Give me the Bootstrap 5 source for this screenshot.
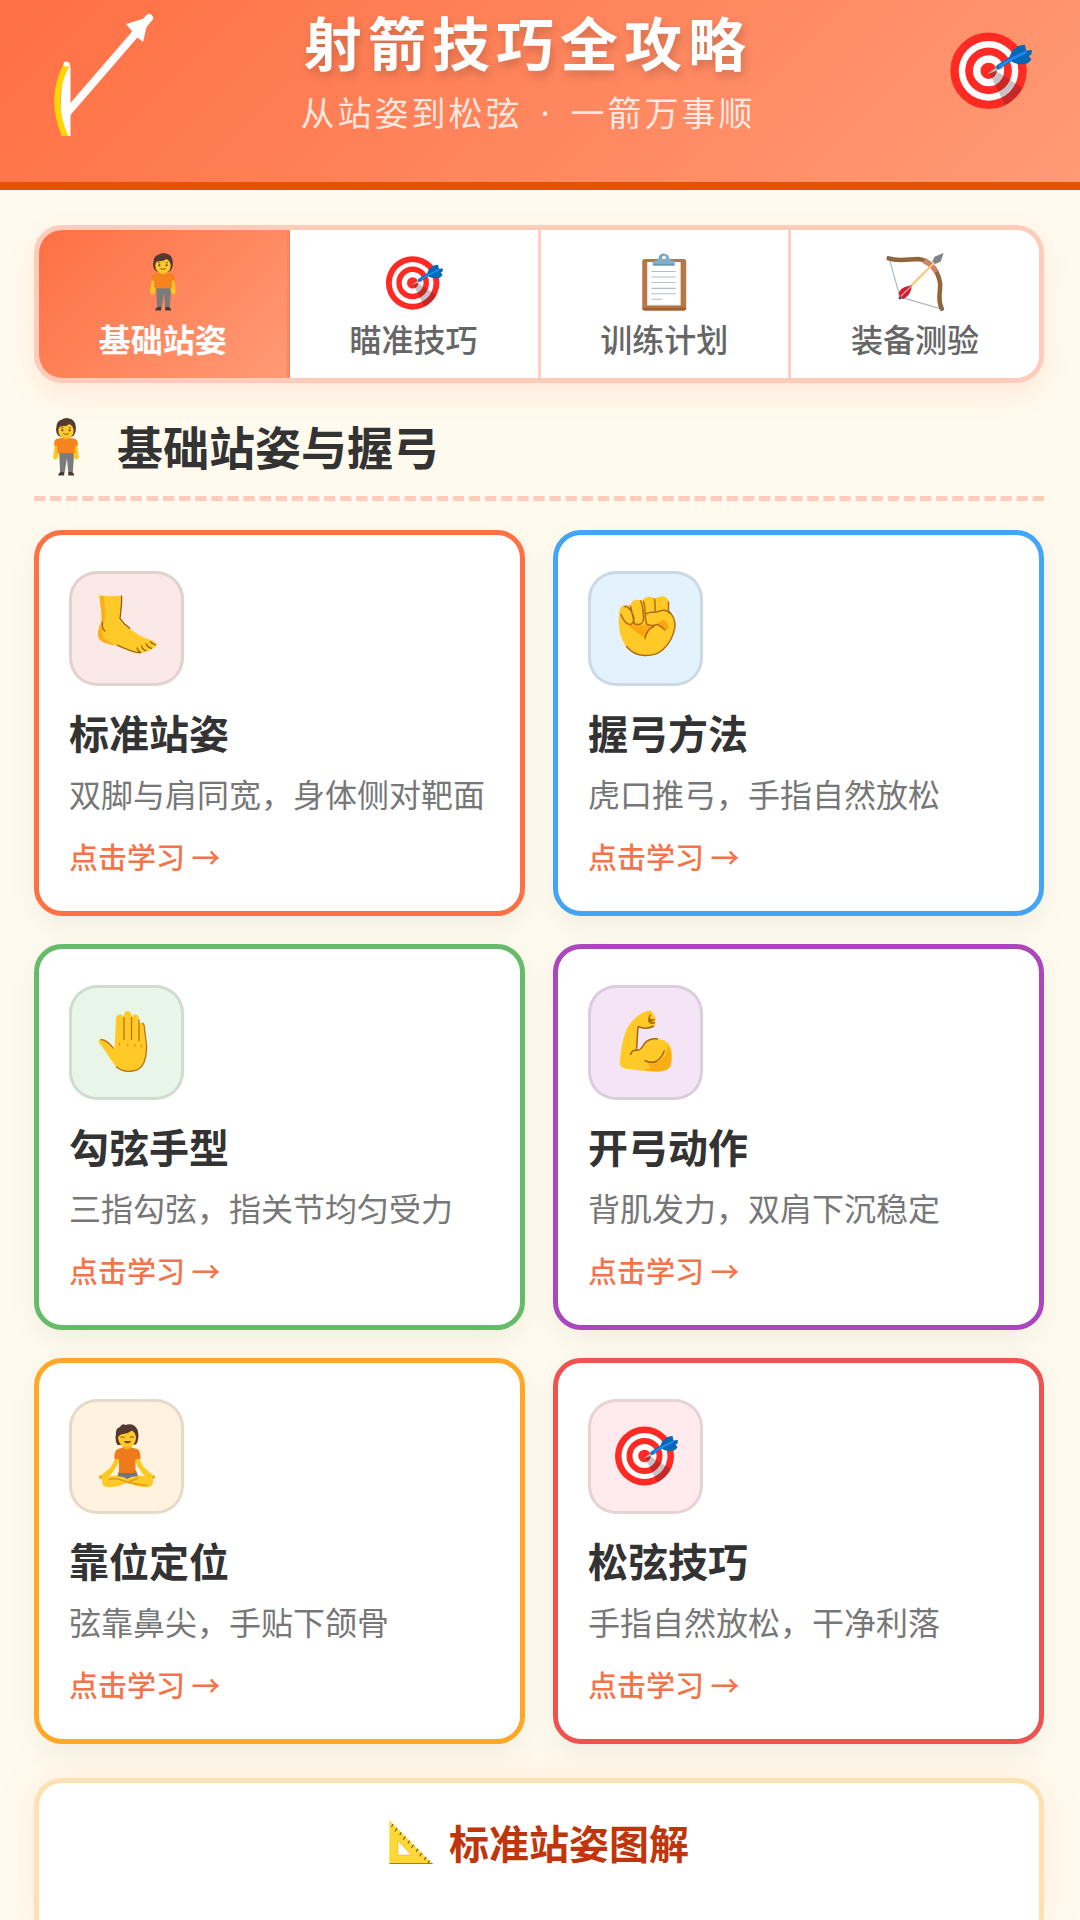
<!DOCTYPE html>
<html lang="zh-CN">
<head>
<meta charset="utf-8">
<meta name="viewport" content="width=device-width, initial-scale=1">
<title>射箭技巧全攻略</title>
<link href="https://cdn.jsdelivr.net/npm/bootstrap@5.3.0/dist/css/bootstrap.min.css" rel="stylesheet">
<style>
  :root { --fire: #ff7043; --peach: #ffccbc; --glow: linear-gradient(135deg, #ff7043, #ff9a76); }
  body { font-family: "Noto Sans CJK SC", "Noto Sans", sans-serif; background: #fffaee; color: #333; }
  svg { display: block; }
  .hero { background: var(--glow); border-bottom: 8px solid #e65100; padding: 0 48px 43px 34px; }
  .hero-side { width: 130px; padding-top: 28px; }
  .hero h1 { font-size: 58px; line-height: 70px; letter-spacing: 6px; font-weight: 700; color: #fff; text-shadow: 2px 5px 10px rgba(0,0,0,.18); margin: 6px 0 10px; }
  .hero p { font-size: 34px; line-height: 52px; letter-spacing: 3px; color: rgba(255,255,255,.82); margin: 0; }
  .hero p span { font-family: "Noto Sans", sans-serif; padding: 0 6px; }
  .page-body { padding: 35px 36px 0 34px; }
  .tab-strip { border: 5px solid var(--peach); border-radius: 28px; overflow: hidden; background: #fff; box-shadow: 0 11px 28px rgba(255,112,67,.12); }
  .tab-strip button { flex: 1 1 0; border: 0; border-right: 3px solid #fbd0c0; background: #fff; color: #666; font-size: 32px; line-height: 40px; font-weight: 500; padding: 23px 0 20px; gap: 7px; }
  .tab-strip button:last-child { border-right: 0; }
  .tab-strip button.active { background: var(--glow); border-right-color: #f8875f; color: #fff; font-weight: 700; }
  .ico-tab { width: 58px; height: 58px; }
  .ico-tile { width: 64px; height: 64px; }
  .ico-hero { width: 83px; height: 83px; }
  .ico-title { width: 44px; height: 44px; }
  .section-head { margin-top: 29px; padding: 6px 3px 20px; gap: 22px; }
  .section-head h2 { font-size: 46px; line-height: 54px; font-weight: 700; margin: 0 0 4px; }
  .dash-rule { height: 5px; margin: 0 -5px 29px 0; background: linear-gradient(90deg, var(--peach) 11px, transparent 11px) 0 0 / 16px 5px round; }
  .skill-grid { --bs-gutter-x: 28px; --bs-gutter-y: 28px; }
  .skill { border: 5px solid var(--tone); border-radius: 28px; padding: 36px 24px 35px 30px; background: #fff; box-shadow: 0 10px 30px rgba(0,0,0,.05); }
  .tile { width: 115px; height: 115px; border-radius: 28px; border: 3px solid rgba(0,0,0,.1); background: var(--tint); padding-bottom: 4px; margin-bottom: 22px; }
  .skill h3 { font-size: 40px; line-height: 48px; font-weight: 700; margin: 0 0 14px; }
  .skill p { font-size: 32px; line-height: 46px; color: #777; margin: 0 0 20px; white-space: nowrap; }
  .skill a { font-size: 29px; line-height: 40px; font-weight: 500; color: #f4744a; text-decoration: none; }
  .t1 { --tone: #ff7043; --tint: #fbe9e7; } .t2 { --tone: #42a5f5; --tint: #e3f2fd; }
  .t3 { --tone: #66bb6a; --tint: #e8f5e9; } .t4 { --tone: #ab47bc; --tint: #f3e5f5; }
  .t5 { --tone: #ffa726; --tint: #fff3e0; } .t6 { --tone: #ef5350; --tint: #ffebee; }
  .diagram { margin-top: 34px; border: 5px solid #ffe0b2; border-bottom: 0; border-radius: 28px 28px 0 0; background: #fff; padding: 34px 28px; box-shadow: 0 0 40px rgba(255,112,67,.1); min-height: 143px; }
  .diagram h2 { font-size: 40px; line-height: 50px; font-weight: 700; color: #bf360c; margin: 0; gap: 16px; }
</style>
<script src="https://cdn.jsdelivr.net/npm/bootstrap@5.3.0/dist/js/bootstrap.bundle.min.js" defer></script>
</head>
<body class="d-flex flex-column min-vh-100">
<svg width="0" height="0" class="position-absolute" aria-hidden="true">
  <symbol id="i-target" viewBox="0 0 128 128">
    <clipPath id="disc"><circle cx="61" cy="66" r="59"/></clipPath>
    <circle cx="61" cy="66" r="59" fill="#ff2a23"/><circle cx="61" cy="66" r="46" fill="#fff"/>
    <circle cx="61" cy="66" r="36" fill="#ff2a23"/><circle cx="61" cy="66" r="24" fill="#fff"/>
    <circle cx="61" cy="66" r="12.500" fill="#ff2a23"/>
    <path clip-path="url(#disc)" d="M61 67 88 122 116 94 72 66z" fill="#3b2030" opacity=".28"/>
    <path d="M60 70 79 56 84 62 62 70z" fill="#b0b6ba"/>
    <path d="M76 60 96 47" stroke="#0f6fb5" stroke-width="7" stroke-linecap="round"/>
    <path d="M93 48C94 36 104 26 117 26L119 35 128 34 127 41 123 43 127 48C123 57 112 58 98 53Z" fill="#0668b4"/>
    <path d="M77 60 94 49 119 37" stroke="#1e88f5" stroke-width="4" fill="none"/>
  </symbol>
  <symbol id="i-person" viewBox="0 0 128 128">
    <path d="M49 76H82L79 121H69L66 88 61 121H51Z" fill="#7b7b7b"/>
    <path d="M47 127Q47 120 53 119H60V127ZM69 119H76Q82 120 82 127H69Z" fill="#4a3a35"/>
    <path d="M40 54 36 84Q35 91 41 92 46 91 47 84L50 60ZM88 54 92 84Q93 91 87 92 82 91 81 84L78 60Z" fill="#fdc921"/>
    <path d="M64 43Q80 44 86 47 91 51 90 61H84L83 78H45L44 61H38Q37 51 42 47 48 44 64 43Z" fill="#f5841f"/>
    <path d="M56 36H72V44Q64 51 56 44Z" fill="#f2b01e"/>
    <path d="M47 39Q40 32 43 19 44 6 54 4 62-2 71 1 83 3 85 16 88 30 81 39L74 42H54Z" fill="#543930"/>
    <path d="M47 27Q48 18 55 18 66 18 71 13 80 17 81 27 81 44 64 44 47 44 47 27Z" fill="#ffca28"/>
    <circle cx="56" cy="27" r="2.300" fill="#543930"/><circle cx="72" cy="27" r="2.300" fill="#543930"/>
    <path d="M58 34Q64 39 70 34M53 22 58 21M70 21 75 22" stroke="#7b4a24" stroke-width="2" fill="none"/>
  </symbol>
  <symbol id="i-board" viewBox="0 0 128 128">
    <rect x="16" y="13" width="97" height="114" rx="5" fill="#ba7642"/>
    <path d="M16 121Q16 127 22 127H107Q113 127 113 121Z" fill="#a0602f"/>
    <path d="M27 20H100V115H27Z" fill="#fff"/><path d="M100 20V115H27" fill="none" stroke="#dedede" stroke-width="2"/>
    <path d="M36 41H90M36 53H90M36 65H90M36 78H90M36 90H90M36 102H60" stroke="#b4c0c4" stroke-width="2.400"/>
    <path d="M39 28V21Q39 18 44 17L52 14Q52 1 64 1 75 1 76 14L84 17Q88 18 88 22V28Z" fill="#82aec8"/>
    <circle cx="64" cy="10" r="4" fill="#fff"/><path d="M54 13Q54 3 64 3M41 26H86" stroke="#5f8ea9" stroke-width="2" fill="none"/>
  </symbol>
  <symbol id="i-bow" viewBox="0 0 128 128">
    <path d="M7 12 31 97 123 124" fill="none" stroke="#b0bec5" stroke-width="2.800"/>
    <path d="M6 12C26 19 48 14 70 13 98 14 114 40 119 64 122 84 112 102 123 123" fill="none" stroke="#916639" stroke-width="10" stroke-linecap="round"/>
    <path d="M84 18Q102 25 111 42" fill="none" stroke="#d0836a" stroke-width="11"/>
    <path d="M31 97 106 22" stroke="#f7c873" stroke-width="4.500"/>
    <path d="M28 92Q29 77 49 73L56 71Q58 78 54 85 49 97 37 102Z" fill="#cc1f36"/>
    <path d="M30 98 56 73" stroke="#f59a8d" stroke-width="3"/>
    <path d="M102 19 107 8 127 0 121 19 109 24Z" fill="#848484"/>
    <circle cx="31" cy="99" r="3.500" fill="#4d4d4d"/><path d="M3 7 10 15M118 122 127 121" stroke="#6d7377" stroke-width="3"/>
  </symbol>
  <symbol id="i-foot" viewBox="0 0 128 128">
    <path d="M9 1Q30 4 53 1 54 16 50 47 57 58 70 67 86 82 111 90 124 94 123 101 120 107 114 107 110 113 103 112 98 117 91 116 80 119 68 111 52 104 35 99 11 96 7 85 4 76 12 56 16 42 11 21Z" fill="#ffca28"/>
    <path d="M9 1 18 2 21 42Q11 72 17 85 27 96 44 101 13 98 7 85 4 74 12 55 15 43 11 21Z" fill="#fbae17"/>
    <path d="M53 1Q54 16 50 47 57 58 70 67M15 54Q13 68 21 73M44 100Q70 113 91 116M84 105Q85 112 92 116M93 101Q94 109 103 112M102 97Q105 105 114 107M110 93Q116 99 122 100" fill="none" stroke="#8d5a12" stroke-width="2.500"/>
  </symbol>
  <symbol id="i-fist" viewBox="0 0 128 128">
    <path d="M10 39Q10 20 24 20L32 20Q37 8 49 10L58 10Q63 1 73 4 79 4 82 8 87 2 98 3 109 4 109 14V32Q122 42 122 63 118 91 98 109 83 122 61 121 38 119 22 100 7 77 10 39Z" fill="#ffca28"/>
    <path d="M25 58Q42 61 57 60L84 62 72 66 63 87Q44 75 25 58ZM84 59 99 49Q107 53 110 67Q101 74 89 61Z" fill="#f9a80f"/>
    <path d="M14 39Q22 60 34 59 45 51 36 35 30 23 21 23M33 23Q37 39 41 58 58 62 59 48 59 23 53 12M59 13Q63 25 62 37M81 8Q83 20 82 34M109 14V32Q122 42 122 63 118 91 98 109 83 122 61 121 39 120 25 103M63 41Q62 34 86 34 104 26 112 37M62 42 65 58Q74 63 86 59 93 61 102 70M80 63Q65 68 62 87" fill="none" stroke="#b46a12" stroke-width="3" stroke-linecap="round"/>
  </symbol>
  <symbol id="i-hand" viewBox="0 0 128 128">
    <path d="M39 79 42 19Q43 10 50 11 57 11 58 19V12Q59 4 66 4 72 5 73 13V19Q74 10 81 11 88 12 88 20L89 31Q90 26 95 28 99 31 99 40L103 70Q104 92 98 107 92 122 75 124 55 127 42 115 32 104 22 86L8 67Q5 63 11 61 25 62 39 79Z" fill="#ffca28"/>
    <path d="M99 40 103 72Q104 92 98 107 92 122 75 124 55 127 42 115M58 16V62M73 16V62M88 24V64M11 61Q25 62 37 79M88 21 88 30M95 28Q99 30 99 40" fill="none" stroke="#ba7414" stroke-width="2.600"/>
    <path d="M50 67Q47 70 49 74M65 69V75M80 70V76M94 71Q92 74 93 77" stroke="#e99e11" stroke-width="3" fill="none"/>
  </symbol>
  <symbol id="i-arm" viewBox="0 0 128 128">
    <path d="M70 3Q78 4 80 13 86 20 82 27 84 35 75 37 60 42 48 36L45 83Q55 83 60 70 70 58 88 60 108 61 114 78 118 94 113 114 108 124 88 125 49 123 27 120 11 118 12 108 13 71 25 41 42 10 70 3Z" fill="#ffca28"/>
    <path d="M107 73Q119 91 113 114 108 124 88 125 70 125 60 123L72 118Q72 111 65 107 105 111 107 73Z" fill="#fbac13"/>
    <path d="M48 35Q64 42 80 34M48 35 45 83M33 92Q36 81 45 83 54 83 60 70 70 58 88 60M61 103Q88 116 101 83M73 11Q69 18 70 24L81 21M69 24Q73 31 82 27M76 28 72 19" fill="none" stroke="#a36711" stroke-width="3"/>
  </symbol>
  <symbol id="i-lotus" viewBox="0 0 128 128">
    <path d="M41 70 32 88 14 103Q6 105 9 111L23 112Q38 99 50 73ZM88 70 97 88 114 103Q123 105 119 111L106 112Q90 99 79 73Z" fill="#fdc921"/>
    <path d="M14 112Q24 105 48 105L65 112 83 105Q107 105 116 113 118 126 107 128 87 130 65 119 43 130 23 128 13 127 14 112Z" fill="#ffca28"/>
    <path d="M27 113Q45 108 65 119L103 125M65 119 87 110M9 106 13 111M119 106 115 111" stroke="#e59a13" stroke-width="3" fill="none"/>
    <path d="M48 95H82L86 106 73 108 65 112 56 108 45 106Z" fill="#757575"/>
    <path d="M64 49Q82 49 87 54 91 59 91 72L81 72V100H48V72L39 72Q38 59 43 54 48 49 64 49Z" fill="#ef7a1a"/>
    <path d="M55 40H74V49Q64 57 55 49Z" fill="#f2ad1e"/>
    <path d="M45 44Q39 35 42 22 41 10 50 8 54 0 61 4 77-1 85 13 90 32 82 43Z" fill="#543930"/>
    <path d="M46 29Q49 22 57 22 68 20 74 15 82 20 82 31 80 48 64 48 47 47 46 29Z" fill="#ffca28"/>
    <path d="M51 29Q55 26 59 29M70 29Q74 26 78 29" fill="none" stroke="#8a4a20" stroke-width="2"/><path d="M57 36Q65 46 73 36Z" fill="#8a4a20"/>
  </symbol>
  <symbol id="i-ruler" viewBox="0 0 128 128">
    <path fill-rule="evenodd" d="M1 1 127 127H1ZM26 60V102H65Z" fill="#fdd835"/>
    <path d="M1 127H127" stroke="#a97a27" stroke-width="4"/><path d="M26 60V102H65Z" fill="none" stroke="#f0b32c" stroke-width="2"/>
    <path d="M12 12 7 20M24 24 17 33M36 36 31 44M48 48 41 57M60 60 55 68M72 72 65 81M84 84 79 92M96 96 89 105M108 108 103 116M118 118 113 125" stroke="#7d5a2d" stroke-width="3.500"/>
  </symbol>
</svg>

<header class="hero d-flex align-items-start">
  <svg width="120" height="136" viewBox="34 0 120 136" role="img" aria-label="弓箭">
    <path d="M67 62Q70 62 70.500 68V136H64Q56 100 67 62Z" fill="#fff"/>
    <path d="M67 64Q48 99 66 138" fill="none" stroke="#ffd600" stroke-width="6"/>
    <path d="M67 64H66" stroke="#fff" stroke-width="5" stroke-linecap="round"/>
    <path d="M67 113 149 18" stroke="#fff" stroke-width="8" stroke-linecap="round"/>
    <path d="M126 24 149 17 143 42 137 37 131 30Z" fill="#fff"/>
  </svg>
  <div class="flex-grow-1 text-center">
    <h1>射箭技巧全攻略</h1>
    <p>从站姿到松弦<span> · </span>一箭万事顺</p>
  </div>
  <div class="hero-side d-flex justify-content-end"><svg class="ico-hero" aria-hidden="true"><use href="#i-target"/></svg></div>
</header>

<main class="page-body flex-grow-1 d-flex flex-column">
  <nav class="tab-strip d-flex" aria-label="章节">
    <button type="button" class="active d-flex flex-column align-items-center" aria-current="true"><svg class="ico-tab" aria-hidden="true"><use href="#i-person"/></svg><span>基础站姿</span></button>
    <button type="button" class="d-flex flex-column align-items-center"><svg class="ico-tab" aria-hidden="true"><use href="#i-target"/></svg><span>瞄准技巧</span></button>
    <button type="button" class="d-flex flex-column align-items-center"><svg class="ico-tab" aria-hidden="true"><use href="#i-board"/></svg><span>训练计划</span></button>
    <button type="button" class="d-flex flex-column align-items-center"><svg class="ico-tab" aria-hidden="true"><use href="#i-bow"/></svg><span>装备测验</span></button>
  </nav>

  <div class="section-head d-flex align-items-center">
    <svg class="ico-tab" aria-hidden="true"><use href="#i-person"/></svg>
    <h2>基础站姿与握弓</h2>
  </div>
  <div class="dash-rule"></div>

  <div class="row row-cols-2 skill-grid">
    <div class="col"><article class="skill t1 h-100 position-relative"><div class="tile d-flex align-items-center justify-content-center"><svg class="ico-tile" aria-hidden="true"><use href="#i-foot"/></svg></div><h3>标准站姿</h3><p>双脚与肩同宽，身体侧对靶面</p><a href="#stance" class="d-block stretched-link">点击学习 →</a></article></div>
    <div class="col"><article class="skill t2 h-100 position-relative"><div class="tile d-flex align-items-center justify-content-center"><svg class="ico-tile" aria-hidden="true"><use href="#i-fist"/></svg></div><h3>握弓方法</h3><p>虎口推弓，手指自然放松</p><a href="#grip" class="d-block stretched-link">点击学习 →</a></article></div>
    <div class="col"><article class="skill t3 h-100 position-relative"><div class="tile d-flex align-items-center justify-content-center"><svg class="ico-tile" aria-hidden="true"><use href="#i-hand"/></svg></div><h3>勾弦手型</h3><p>三指勾弦，指关节均匀受力</p><a href="#hook" class="d-block stretched-link">点击学习 →</a></article></div>
    <div class="col"><article class="skill t4 h-100 position-relative"><div class="tile d-flex align-items-center justify-content-center"><svg class="ico-tile" aria-hidden="true"><use href="#i-arm"/></svg></div><h3>开弓动作</h3><p>背肌发力，双肩下沉稳定</p><a href="#draw" class="d-block stretched-link">点击学习 →</a></article></div>
    <div class="col"><article class="skill t5 h-100 position-relative"><div class="tile d-flex align-items-center justify-content-center"><svg class="ico-tile" aria-hidden="true"><use href="#i-lotus"/></svg></div><h3>靠位定位</h3><p>弦靠鼻尖，手贴下颌骨</p><a href="#anchor" class="d-block stretched-link">点击学习 →</a></article></div>
    <div class="col"><article class="skill t6 h-100 position-relative"><div class="tile d-flex align-items-center justify-content-center"><svg class="ico-tile" aria-hidden="true"><use href="#i-target"/></svg></div><h3>松弦技巧</h3><p>手指自然放松，干净利落</p><a href="#release" class="d-block stretched-link">点击学习 →</a></article></div>
  </div>

  <section class="diagram flex-grow-1">
    <h2 class="d-flex align-items-center justify-content-center"><svg class="ico-title" aria-hidden="true"><use href="#i-ruler"/></svg>标准站姿图解</h2>
  </section>
</main>
</body>
</html>
